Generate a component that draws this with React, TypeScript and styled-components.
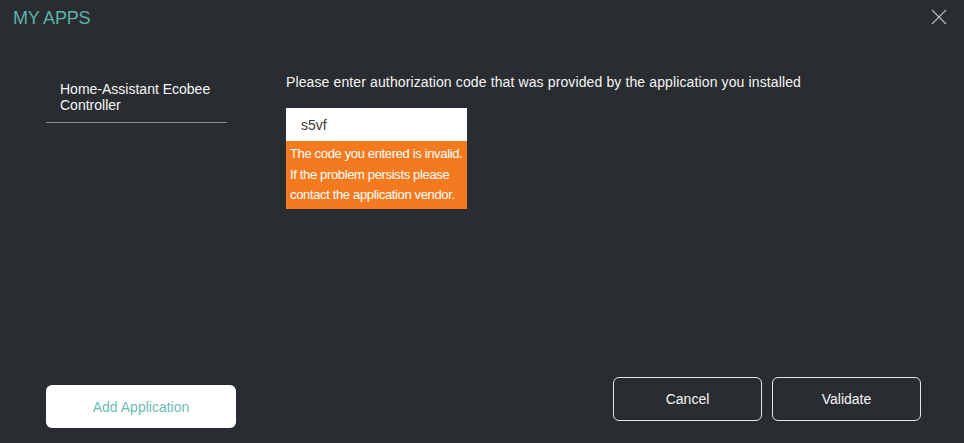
import styled, { createGlobalStyle } from 'styled-components';

const GlobalStyle = createGlobalStyle`
  html, body {
    margin: 0;
    padding: 0;
    background-color: #292d31;
  }
  * {
    box-sizing: border-box;
  }
`;

const App = () => {
  return (
    <>
      <GlobalStyle />
      <S.Page>
        <S.Header>
          <S.Title>MY APPS</S.Title>
          <S.CloseButton aria-label="close">
            <svg width="16" height="16" viewBox="0 0 16 16">
              <path d="M1 1 L15 15 M15 1 L1 15" stroke="#b5b8bb" strokeWidth="1.2" fill="none" />
            </svg>
          </S.CloseButton>
        </S.Header>

        <S.Body>
          <S.Sidebar>
            <S.AppItem>Home-Assistant Ecobee Controller</S.AppItem>
          </S.Sidebar>

          <S.Main>
            <S.Prompt>
              Please enter authorization code that was provided by the application you installed
            </S.Prompt>
            <S.CodeField>
              <S.CodeInput defaultValue="s5vf" />
              <S.ErrorBox>
                The code you entered is invalid.
                <br />
                If the problem persists please
                <br />
                contact the application vendor.
              </S.ErrorBox>
            </S.CodeField>
          </S.Main>
        </S.Body>

        <S.Footer>
          <S.AddButton>Add Application</S.AddButton>
          <S.Actions>
            <S.OutlineButton>Cancel</S.OutlineButton>
            <S.OutlineButton>Validate</S.OutlineButton>
          </S.Actions>
        </S.Footer>
      </S.Page>
    </>
  );
};

const S = {
  Page: styled.div`
    display: flex;
    flex-direction: column;
    width: 964px;
    height: 443px;
    background-color: #292d31;
    font-family: 'Liberation Sans', Arial, sans-serif;
    color: #f5f5f5;
  `,

  Header: styled.header`
    display: flex;
    justify-content: space-between;
    align-items: flex-start;
    height: 36px;
    padding: 8px 17px 0 13px;
  `,

  Title: styled.h1`
    margin: 0;
    font-size: 18px;
    line-height: 21px;
    font-weight: normal;
    letter-spacing: -0.2px;
    color: #5eb1a8;
  `,

  CloseButton: styled.button`
    display: flex;
    padding: 0;
    margin-top: 1px;
    border: none;
    background: none;
    cursor: pointer;
  `,

  Body: styled.div`
    display: flex;
    flex: 1;
  `,

  Sidebar: styled.aside`
    width: 181px;
    margin-left: 46px;
    padding-top: 45px;
  `,

  AppItem: styled.div`
    padding: 0 14px 9px;
    border-bottom: 1px solid #8a8d90;
    font-size: 14px;
    line-height: 16px;
    color: #f5f5f5;
  `,

  Main: styled.main`
    margin-left: 59px;
    padding-top: 38px;
  `,

  Prompt: styled.p`
    margin: 0 0 18px;
    font-size: 14px;
    line-height: 16px;
    letter-spacing: 0.12px;
    color: #f5f5f5;
  `,

  CodeField: styled.div`
    width: 181px;
  `,

  CodeInput: styled.input`
    display: block;
    width: 100%;
    height: 33px;
    padding: 0 15px;
    border: none;
    outline: none;
    background-color: #ffffff;
    font-family: 'Liberation Sans', Arial, sans-serif;
    font-size: 14px;
    color: #3a3a3a;
  `,

  ErrorBox: styled.div`
    height: 68px;
    padding: 3px 4px 0;
    background-color: #f47a20;
    font-size: 13px;
    line-height: 20.5px;
    letter-spacing: -0.35px;
    white-space: nowrap;
    color: #ffffff;
  `,

  Footer: styled.footer`
    display: flex;
    justify-content: space-between;
    align-items: flex-start;
    height: 66px;
    padding: 0 43px 0 46px;
  `,

  AddButton: styled.button`
    width: 190px;
    height: 43px;
    margin-top: 8px;
    border: none;
    border-radius: 6px;
    background-color: #ffffff;
    font-family: 'Liberation Sans', Arial, sans-serif;
    font-size: 14px;
    color: #6dbdb3;
    cursor: pointer;
  `,

  Actions: styled.div`
    display: flex;
    gap: 10px;
  `,

  OutlineButton: styled.button`
    width: 149px;
    height: 44px;
    border: 1px solid #e6e6e6;
    border-radius: 6px;
    background: transparent;
    font-family: 'Liberation Sans', Arial, sans-serif;
    font-size: 14px;
    color: #f5f5f5;
    cursor: pointer;
  `,
};

export default App;
